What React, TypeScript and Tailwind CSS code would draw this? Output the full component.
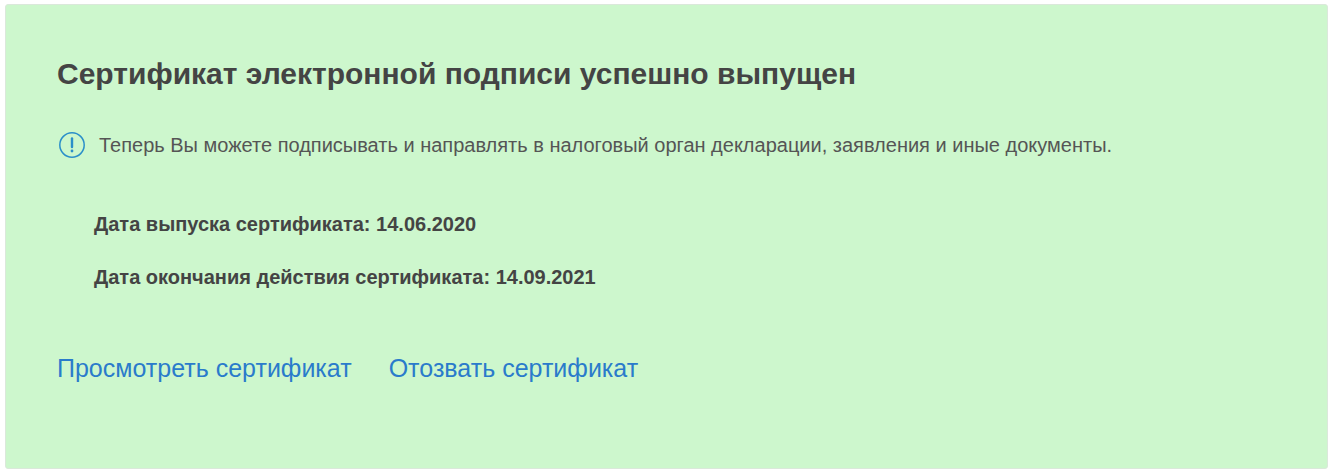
export default function App() {
  return (
    <div className="w-[1332px] h-[473px] bg-white pt-1 pl-[5px] pr-1 pb-1 font-['Liberation_Sans',Arial,sans-serif] overflow-hidden">
      <div className="h-[465px] rounded-[3px] bg-[#cdf7cd] border border-[#dbe8db] pl-[51px] pt-[52px] text-[#444444]">
        <h1 className="text-[30px] leading-[34px] font-bold">Сертификат электронной подписи успешно выпущен</h1>
        <div className="flex items-center mt-[40px] h-[28px]">
          <svg width="28" height="28" viewBox="0 0 28 28" fill="none" className="ml-[1px] shrink-0">
            <circle cx="14" cy="14" r="12.2" stroke="#2b8fc9" strokeWidth="1.5" />
            <path d="M14 7.5V16" stroke="#2b8fc9" strokeWidth="2.4" strokeLinecap="round" />
            <circle cx="14" cy="20" r="1.4" fill="#2b8fc9" />
          </svg>
          <p className="ml-[13px] text-[20px] text-[#555555]">Теперь Вы можете подписывать и направлять в налоговый орган декларации, заявления и иные документы.</p>
        </div>
        <div className="ml-[37px] mt-[53px] text-[20px] font-bold leading-[24px]">
          <p>Дата выпуска сертификата: 14.06.2020</p>
          <p className="mt-[29px]">Дата окончания действия сертификата: 14.09.2021</p>
        </div>
        <div className="flex gap-[37px] mt-[64px] text-[25px] leading-[30px] text-[#2a7bcb]">
          <a>Просмотреть сертификат</a>
          <a>Отозвать сертификат</a>
        </div>
      </div>
    </div>
  );
}
